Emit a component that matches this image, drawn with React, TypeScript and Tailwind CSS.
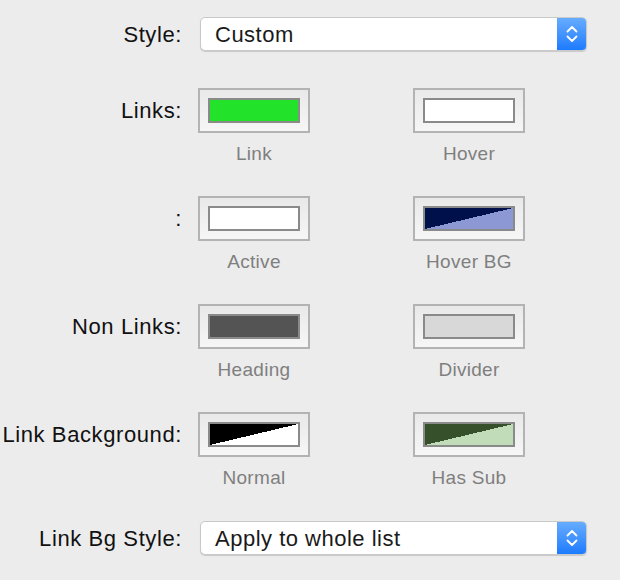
import React from "react";

const font = { fontFamily: '"Liberation Sans", Arial, sans-serif' };

function Chevrons() {
  return (
    <svg width="12" height="18" viewBox="0 0 12 18" fill="none" stroke="white" strokeWidth="1.8" strokeLinecap="round" strokeLinejoin="round">
      <path d="M1.5 6.5 L6 2 L10.5 6.5" />
      <path d="M1.5 11.5 L6 16 L10.5 11.5" />
    </svg>
  );
}

function Select({ value }: { value: string }) {
  return (
    <div className="ml-[18px] flex h-[34px] w-[387px] overflow-hidden rounded-[5px] border border-[#c9c9c9] bg-white shadow-[0_1px_1px_rgba(0,0,0,0.15)]">
      <div className="flex flex-1 items-center pl-[14px] text-[22px] tracking-[0.5px] text-[#1a1a1a]">{value}</div>
      <div className="flex w-[29px] items-center justify-center bg-gradient-to-b from-[#66acff] to-[#1b7bff]">
        <Chevrons />
      </div>
    </div>
  );
}

function Well({ fill, label }: { fill: string; label: string }) {
  return (
    <div className="flex w-[112px] flex-col items-center">
      <div className="flex h-[45px] w-[112px] items-center justify-center border-2 border-[#b3b3b3] bg-gradient-to-b from-[#e9e9e9] to-[#f6f6f6]">
        <div className={`h-[25px] w-[92px] border-2 border-[#8a8a8a] ${fill}`} />
      </div>
      <div className="mt-[9px] text-[19px] leading-[24px] tracking-[0.3px] text-[#7f7f7f]">{label}</div>
    </div>
  );
}

function Label({ text }: { text: string }) {
  return (
    <div className="flex h-[45px] w-[182px] shrink-0 items-center justify-end whitespace-nowrap text-[22px] tracking-[0.6px] text-[#111]">
      {text}
    </div>
  );
}

function SwatchRow({ label, a, b, className }: { label: string; a: [string, string]; b: [string, string]; className: string }) {
  return (
    <div className={`flex items-start ${className}`}>
      <Label text={label} />
      <div className="ml-[16px] flex gap-[103px]">
        <Well fill={a[0]} label={a[1]} />
        <Well fill={b[0]} label={b[1]} />
      </div>
    </div>
  );
}

export default function App() {
  return (
    <div className="h-[580px] w-[620px] overflow-hidden bg-[#ececec] pt-[17px]" style={font}>
      <div className="flex items-center">
        <div className="w-[182px] whitespace-nowrap text-right text-[22px] tracking-[0.6px] text-[#111]">Style:</div>
        <Select value="Custom" />
      </div>
      <SwatchRow
        className="mt-[37px]"
        label="Links:"
        a={["bg-[#22e22a]", "Link"]}
        b={["bg-white", "Hover"]}
      />
      <SwatchRow
        className="mt-[30px]"
        label=":"
        a={["bg-white", "Active"]}
        b={["bg-[linear-gradient(to_bottom_right,#00104a_50%,#8b98d4_50%)]", "Hover BG"]}
      />
      <SwatchRow
        className="mt-[30px]"
        label="Non Links:"
        a={["bg-[#545454]", "Heading"]}
        b={["bg-[#d8d8d8]", "Divider"]}
      />
      <SwatchRow
        className="mt-[30px]"
        label="Link Background:"
        a={["bg-[linear-gradient(to_bottom_right,#000000_50%,#ffffff_50%)]", "Normal"]}
        b={["bg-[linear-gradient(to_bottom_right,#36502c_50%,#c0dcb8_50%)]", "Has Sub"]}
      />
      <div className="mt-[31px] flex items-center">
        <div className="w-[182px] whitespace-nowrap text-right text-[22px] tracking-[0.6px] text-[#111]">Link Bg Style:</div>
        <Select value="Apply to whole list" />
      </div>
    </div>
  );
}
